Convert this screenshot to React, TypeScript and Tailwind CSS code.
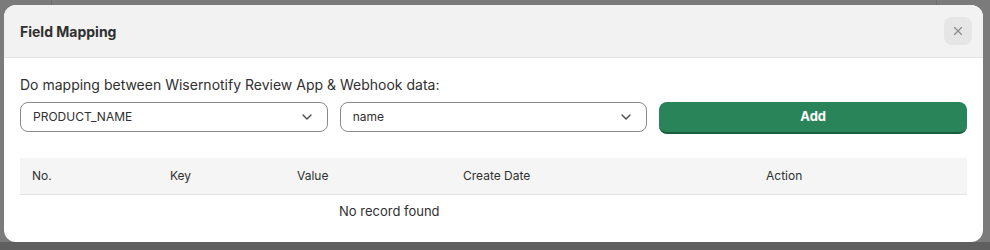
import { ChevronDown, X } from 'lucide-react';

const columns = [
  { label: 'No.', width: 'w-[138px]' },
  { label: 'Key', width: 'w-[127px]' },
  { label: 'Value', width: 'w-[166px]' },
  { label: 'Create Date', width: 'w-[303px]' },
  { label: 'Action', width: 'flex-1' },
];

function Select({ value }: { value: string }) {
  return (
    <div className="flex h-[30px] items-center justify-between rounded-[8px] border border-[#8a8a8a] bg-white pl-3 pr-3 text-[12px] text-[#303030]">
      <span>{value}</span>
      <ChevronDown className="h-4 w-4 text-[#4a4a4a]" strokeWidth={2} aria-hidden="true" />
    </div>
  );
}

export default function App() {
  return (
    <div
      className="relative h-[250px] w-[990px] overflow-hidden bg-[#7b7b7b] pl-[4px] pt-[5px]"
      style={{ fontFamily: 'Inter, "Noto Sans", sans-serif' }}
    >
      <div className="absolute left-[51px] top-0 h-[5px] w-px bg-[#6c6c6c]" />
      <div className="absolute left-[936px] top-0 h-[5px] w-px bg-[#6c6c6c]" />
      <div className="absolute bottom-0 left-0 h-[8px] w-full bg-[#5f5f5f]" />

      <div className="relative flex h-[237px] w-[979px] flex-col overflow-hidden rounded-[12px] bg-white">
        <div className="flex h-[53px] items-center justify-between border-b border-[#e3e3e3] bg-[#f2f2f2] pl-4 pr-[11px]">
          <h2 className="text-[14px] font-bold text-[#303030]">Field Mapping</h2>
          <button className="flex h-[28px] w-[28px] items-center justify-center rounded-[8px] bg-[#e6e6e6]">
            <X className="h-[14px] w-[14px] text-[#8a8a8a]" strokeWidth={2} aria-hidden="true" />
          </button>
        </div>

        <div className="px-4 pt-[17px]">
          <p className="text-[14px] leading-5 text-[#303030]">Do mapping between Wisernotify Review App &amp; Webhook data:</p>

          <div className="mt-[7px] grid grid-cols-3 gap-3">
            <Select value="PRODUCT_NAME" />
            <Select value="name" />
            <button className="h-[32px] rounded-[8px] border-b-[2px] border-[#1a5c3c] bg-[#2a8459] text-[13px] font-bold text-white">
              Add
            </button>
          </div>

          <div className="mt-[24px]">
            <div className="flex h-[37px] items-center border-b border-[#e3e3e3] bg-[#f5f5f5] pl-3 text-[12px] text-[#303030]">
              {columns.map((col) => (
                <div key={col.label} className={col.width}>
                  {col.label}
                </div>
              ))}
            </div>
            <div className="flex h-[33px] items-center pl-[319px] text-[13px] text-[#303030]">No record found</div>
          </div>
        </div>
      </div>
    </div>
  );
}
